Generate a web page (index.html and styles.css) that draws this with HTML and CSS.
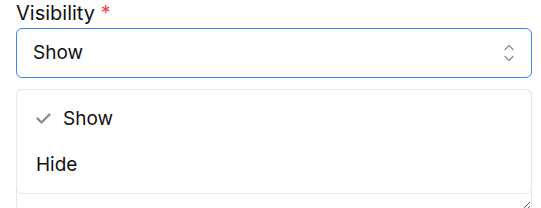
FILE: index.html
```html
<!DOCTYPE html>
<html>
<head>
<meta charset="utf-8">
<link rel="stylesheet" href="styles.css">
</head>
<body>
<form class="form">
  <div class="field">
    <label class="label">Visibility <span class="req">*</span></label>
    <div class="select-wrap">
      <div class="select">
        <span class="select-value">Show</span>
        <svg class="chevrons" width="14" height="20" viewBox="0 0 14 20" fill="none" stroke="#8a8f98" stroke-width="1.3" stroke-linecap="round" stroke-linejoin="round">
          <path d="M3 6.5 L7 2.5 L11 6.5"/>
          <path d="M3 13.5 L7 17.5 L11 13.5"/>
        </svg>
      </div>
      <ul class="menu">
        <li class="option selected">
          <svg class="check" width="15" height="11" viewBox="0 0 15 11" fill="none" stroke="#8c8c8c" stroke-width="2.4" stroke-linecap="round" stroke-linejoin="round"><path d="M1.5 5.5 L5.5 9.5 L13.5 1.5"/></svg>
          <span>Show</span>
        </li>
        <li class="option">Hide</li>
      </ul>
    </div>
  </div>
  <div class="field">
    <textarea class="textarea"></textarea>
  </div>
</form>
</body>
</html>
```

FILE: styles.css
```css
* { box-sizing: border-box; }
html, body { margin: 0; padding: 0; background: #fff; }
body {
  font-family: Inter, "Noto Sans", sans-serif;
  color: #111111;
  overflow: hidden;
}
.form {
  width: 516px;
  margin-left: 16px;
  display: flex;
  flex-direction: column;
  gap: 11px;
}
.field { display: flex; flex-direction: column; }
.label {
  font-size: 20px;
  line-height: 26px;
  margin-bottom: 2px;
  color: #111111;
}
.req { color: #ef4444; }
.select-wrap { position: relative; }
.select {
  height: 50px;
  border: 1px solid #3b82f6;
  border-radius: 6px;
  display: flex;
  align-items: center;
  justify-content: space-between;
  padding: 0 15px 0 16px;
  font-size: 19px;
}
.select-value { line-height: 24px; }
.chevrons { display: block; }
.menu {
  position: absolute;
  left: 0;
  right: 0;
  top: calc(100% + 11px);
  margin: 0;
  padding: 5px 0;
  list-style: none;
  background: #fff;
  border: 1px solid #e5e7eb;
  border-radius: 6px;
  z-index: 2;
  height: 105px;
}
.option {
  height: 46px;
  display: flex;
  align-items: center;
  gap: 12px;
  padding-left: 19px;
  font-size: 19px;
  color: #111111;
}
.check { display: block; }
.textarea {
  display: block;
  width: 100%;
  height: 122px;
  border: 1px solid #e5e7eb;
  border-radius: 6px;
  font-family: inherit;
  font-size: 16px;
  resize: vertical;
}
```
